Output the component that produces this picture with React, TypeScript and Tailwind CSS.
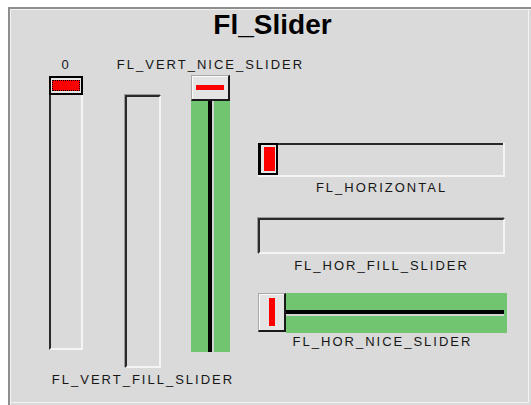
import type { ReactNode } from "react";

const dark = "border-[#2a2a2a]";

const Label = ({ children, className = "" }: { children: ReactNode; className?: string }) => (
  <div
    className={`h-[13px] whitespace-nowrap text-[13px] leading-[13px] tracking-[2px] text-[#161616] ${className}`}
  >
    {children}
  </div>
);

// FL_VERT_SLIDER with focus box on the knob
const VertSlider = () => (
  <div className="flex h-[274px] w-[34px] flex-col">
    <div className="h-[19px] border-2 border-black bg-[#e6e6e6] px-[1px] py-[2px]">
      <div className="h-full border border-dotted border-black bg-[#ff0000]" />
    </div>
    <div className={`flex-1 border-l-2 ${dark} border-r-2 border-r-[#f4f4f4] border-b-2 border-b-[#f4f4f4]`} />
  </div>
);

// FL_VERT_FILL_SLIDER at value 0: just the sunken box
const VertFillSlider = () => (
  <div className="h-[273px] w-[36px] border-2 border-t-[#2a2a2a] border-l-[#2a2a2a] border-r-[#f4f4f4] border-b-[#f4f4f4] shadow-[-1px_-1px_0_#9a9a9a]" />
);

const VertNiceSlider = () => (
  <div className="flex h-[277px] w-[39px] flex-col">
    <div className="flex h-[26px] items-center justify-center border-t border-l border-[#a8a8a8] border-r-2 border-r-[#1a1a1a] border-b-2 border-b-[#1a1a1a] bg-[#e4e4e4] shadow-[inset_1px_1px_0_#fafafa]">
      <div className="h-[5px] w-[28px] bg-[#ff0000]" />
    </div>
    <div className="flex flex-1">
      <div className="flex-1 bg-[#71c571]" />
      <div className="w-[4px] bg-black" />
      <div className="w-[2px] bg-[#d4d4d4]" />
      <div className="flex-1 bg-[#71c571]" />
    </div>
  </div>
);

const HorSlider = () => (
  <div className="flex h-[34px] w-[247px] border-r-2 border-b-2 border-[#f4f4f4]">
    <div className="h-full w-[20px] border-2 border-l-[3px] border-black bg-[#e6e6e6] py-[2px] pl-[3px] pr-[1px]">
      <div className="h-full bg-[#ff0000]" />
    </div>
    <div className={`flex-1 border-t-2 ${dark}`} />
  </div>
);

const HorFillSlider = () => (
  <div className="h-[36px] w-[247px] border-2 border-t-[#2a2a2a] border-l-[#2a2a2a] border-r-[#f4f4f4] border-b-[#f4f4f4] shadow-[-1px_-1px_0_#9a9a9a]" />
);

const HorNiceSlider = () => (
  <div className="flex h-[40px] w-[249px]">
    <div className="flex h-[39px] w-[28px] items-center justify-center border-t border-l border-[#a8a8a8] border-r-2 border-r-[#1a1a1a] border-b-2 border-b-[#1a1a1a] bg-[#e4e4e4] shadow-[inset_1px_1px_0_#fafafa]">
      <div className="h-[28px] w-[6px] bg-[#ff0000]" />
    </div>
    <div className="flex flex-1 flex-col">
      <div className="flex-1 bg-[#71c571]" />
      <div className="flex h-[4px]">
        <div className="flex-1 bg-black" />
        <div className="w-[3px] bg-[#71c571]" />
      </div>
      <div className="flex h-[2px]">
        <div className="flex-1 bg-[#d4d4d4]" />
        <div className="w-[3px] bg-[#71c571]" />
      </div>
      <div className="flex-1 bg-[#71c571]" />
    </div>
  </div>
);

export default function App() {
  return (
    <div className="min-h-screen bg-white pl-[8px] pt-[7px] font-['Liberation_Sans',Arial,sans-serif]">
      <div className="h-[398px] w-[523px] border-l-2 border-t-2 border-[#8e8e8e] bg-[#dadada]">
        <div className="h-full w-full shadow-[inset_1px_1px_0_#f2f2f2,inset_-2px_-2px_0_#dadada,inset_-3px_-3px_0_#f2f2f2]">
          <div className="h-[40px] pl-[4px] text-center text-[28px] font-bold leading-[32px] text-black">
            Fl_Slider
          </div>

          <div className="flex items-start">
            <div className="ml-[39px] flex w-[34px] flex-col items-center">
              <Label className="mt-[9px]">0</Label>
              <div className="mt-[5px]">
                <VertSlider />
              </div>
            </div>

            <div className="ml-[42px] flex w-[36px] flex-col items-center">
              <div className="mt-[46px]">
                <VertFillSlider />
              </div>
              <Label className="mt-[5px]">FL_VERT_FILL_SLIDER</Label>
            </div>

            <div className="ml-[30px] flex w-[39px] flex-col items-center">
              <Label className="mt-[9px]">FL_VERT_NICE_SLIDER</Label>
              <div className="mt-[4px]">
                <VertNiceSlider />
              </div>
            </div>

            <div className="ml-[28px] flex w-[249px] flex-col">
              <div className="mt-[94px]">
                <HorSlider />
              </div>
              <Label className="mt-[4px] w-[247px] text-center">FL_HORIZONTAL</Label>
              <div className="mt-[24px]">
                <HorFillSlider />
              </div>
              <Label className="mt-[5px] w-[247px] text-center">FL_HOR_FILL_SLIDER</Label>
              <div className="mt-[21px]">
                <HorNiceSlider />
              </div>
              <Label className="mt-[2px] w-[249px] text-center">FL_HOR_NICE_SLIDER</Label>
            </div>
          </div>
        </div>
      </div>
    </div>
  );
}
